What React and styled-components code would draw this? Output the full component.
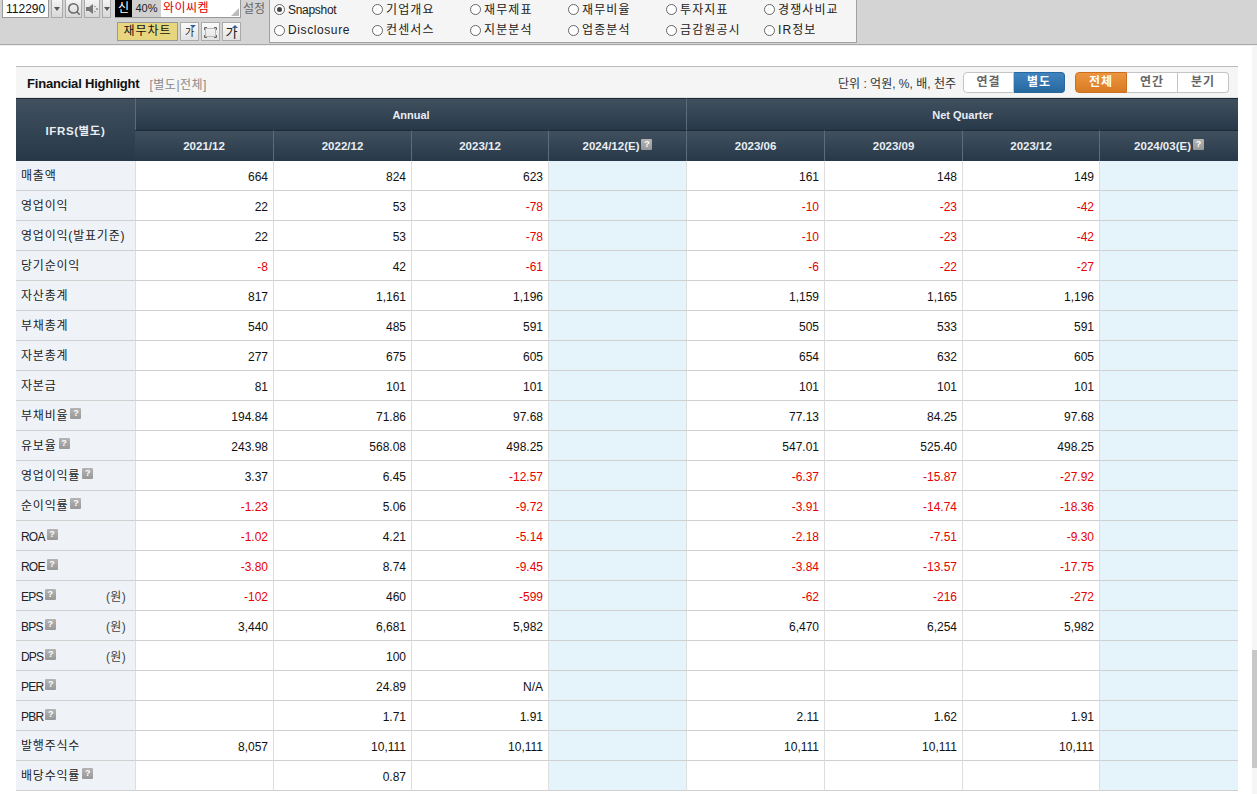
import styled, { createGlobalStyle } from "styled-components";
import { Search } from "lucide-react";

const GlobalStyle = createGlobalStyle`
  html, body {
    margin: 0;
    padding: 0;
    background: #fff;
    overflow: hidden;
  }
  body {
    font-family: "Liberation Sans", "Noto Sans CJK KR", sans-serif;
    font-size: 12px;
    color: #111;
  }
`;

const Page = styled.div`
  width: 1257px;
  height: 794px;
  position: relative;
  overflow: hidden;
`;

const Toolbar = styled.div`
  height: 45px;
  box-sizing: border-box;
  background: #d4d4d4;
  border-bottom: 1px solid #a8a8a8;
  box-shadow: 0 1px 0 #f0f0f0;
  display: flex;
  align-items: flex-start;
  padding-left: 2px;
`;

const LeftTools = styled.div`
  width: 267px;
  display: flex;
  flex-direction: column;
  gap: 4px;
`;

const ToolRow = styled.div`
  height: 18px;
  display: flex;
  align-items: stretch;
  gap: 2px;
  padding-left: ${(p) => p.$pad || 0}px;
`;

const CodeBox = styled.div`
  width: 47px;
  box-sizing: border-box;
  background: #fff;
  border: 1px solid #999;
  border-top: none;
  font-size: 12px;
  line-height: 18px;
  padding-left: 3px;
`;

const ToolBtn = styled.div`
  width: ${(p) => p.$w}px;
  box-sizing: border-box;
  background: linear-gradient(#f4f4f4, #d8d8d8);
  border: 1px solid #aaa;
  border-top: none;
  display: flex;
  align-items: center;
  justify-content: center;
  color: #666;
`;

const Caret = styled.span`
  width: 0;
  height: 0;
  border-left: 3px solid transparent;
  border-right: 3px solid transparent;
  border-top: 4px solid #555;
`;

const NameBox = styled.div`
  width: 126px;
  margin-left: 2px;
  box-sizing: border-box;
  background: #fff;
  border-right: 1px solid #999;
  border-bottom: 1px solid #999;
  display: flex;
  position: relative;
`;

const CreditTag = styled.span`
  width: 17px;
  background: #000;
  color: #fff;
  text-align: center;
  line-height: 17px;
`;

const MarginTag = styled.span`
  width: 29px;
  background: #d0d0d0;
  color: #222;
  text-align: center;
  font-size: 11px;
  line-height: 17px;
`;

const StockName = styled.span`
  color: #e00000;
  padding-left: 2px;
  line-height: 17px;
  letter-spacing: 0.5px;
`;

const Grip = styled.span`
  position: absolute;
  right: 1px;
  bottom: 1px;
  width: 0;
  height: 0;
  border-left: 8px solid transparent;
  border-bottom: 8px solid #bbb;
`;

const SetupLabel = styled.span`
  color: #666;
  line-height: 18px;
  white-space: nowrap;
`;

const ChartBtn = styled.div`
  width: 61px;
  height: 19px;
  box-sizing: border-box;
  background: #e8d67e;
  border: 1px solid #999;
  text-align: center;
  line-height: 17px;
  letter-spacing: 1px;
`;

const SmallBtn = styled.div`
  width: 19px;
  height: 19px;
  box-sizing: border-box;
  background: linear-gradient(#fafafa, #e2e2e2);
  border: 1px solid #aaa;
  position: relative;
  display: flex;
  align-items: flex-end;
  justify-content: center;
  font-size: ${(p) => p.$size || 10}px;
  line-height: 15px;
  color: #222;
`;

const FrameIcon = styled.svg`
  margin-bottom: 2px;
`;

const Arrow = styled.span`
  position: absolute;
  top: 2px;
  right: 2px;
  width: 0;
  height: 0;
  border-left: 3px solid transparent;
  border-right: 3px solid transparent;
  ${(p) => p.$up ? "border-bottom: 3px solid #3a5a9a;" : "border-top: 3px solid #3a5a9a;"}
`;

const MenuPanel = styled.div`
  width: 588px;
  height: 43px;
  box-sizing: border-box;
  background: #f5f5f5;
  border: 1px solid #a0a0a0;
  border-top: none;
  display: grid;
  grid-template-columns: repeat(6, 98px);
  grid-template-rows: 19px 22px;
  padding: 0 0 0 4px;
`;

const MenuItem = styled.div`
  display: flex;
  align-items: center;
  gap: 3px;
  color: #222;
  line-height: 16px;
  letter-spacing: ${(p) => p.$ls}px;
`;

const Radio = styled.span`
  width: 11px;
  height: 11px;
  box-sizing: border-box;
  border-radius: 50%;
  border: 1px solid #666;
  background: #fff;
  display: flex;
  align-items: center;
  justify-content: center;
  &::after {
    content: "";
    display: ${(p) => p.$on ? "block" : "none"};
    width: 5px;
    height: 5px;
    border-radius: 50%;
    background: #444;
  }
`;

const Section = styled.div`
  margin: 21px 19px 0 16px;
`;

const TitleBar = styled.div`
  height: 32px;
  box-sizing: border-box;
  background: #f5f5f5;
  border-top: 1px solid #bbb;
  border-bottom: 1px solid #e0e0e0;
  display: flex;
  align-items: center;
  padding: 0 9px 0 11px;
`;

const Title = styled.h2`
  margin: 0;
  padding-top: 2px;
  font-size: 13px;
  font-weight: 700;
  color: #111;
  letter-spacing: -0.2px;
`;

const SubTitle = styled.span`
  margin-left: 10px;
  padding-top: 2px;
  color: #888;
  letter-spacing: 0.5px;
`;

const Unit = styled.span`
  margin-left: auto;
  margin-right: 7px;
  color: #333;
`;

const Segment = styled.div`
  display: flex;
  height: 21px;
  margin-left: ${(p) => p.$ml || 0}px;
`;

const SegBtn = styled.div`
  width: ${(p) => p.$w || 51}px;
  box-sizing: border-box;
  border: 1px solid #c4c4c4;
  border-left-width: 0;
  background: #fff;
  color: #666;
  font-weight: 700;
  letter-spacing: 1px;
  text-align: center;
  line-height: 19px;
  &:first-child {
    border-left-width: 1px;
    border-radius: 4px 0 0 4px;
  }
  &:last-child {
    border-radius: 0 4px 4px 0;
  }
  ${(p) => p.$tone === "blue" && `
    background: linear-gradient(#3f83c0, #27689f);
    border-color: #27689f;
    color: #fff;
  `}
  ${(p) => p.$tone === "orange" && `
    background: linear-gradient(#ec963f, #d97a24);
    border-color: #c97020;
    color: #fff;
  `}
`;

const Table = styled.table`
  width: 1222px;
  table-layout: fixed;
  border-collapse: separate;
  border-spacing: 0;
`;

const HeadCell = styled.th`
  height: ${(p) => p.$h}px;
  padding: 0;
  box-sizing: border-box;
  background: linear-gradient(#40505f, #273848);
  border-top: 1px solid #1d2a36;
  border-left: 1px solid #5d6c79;
  color: #e8eef3;
  font-size: ${(p) => p.$size || 11.5}px;
  font-weight: 700;
  letter-spacing: ${(p) => p.$ls || 0}px;
  text-align: center;
  &:first-child {
    border-left: none;
  }
`;

const Row = styled.tr`
  height: 30px;
`;

const LabelCell = styled.td`
  padding: ${(p) => p.$latin ? "2px" : "0"} 9px 0 5px;
  box-sizing: border-box;
  background: #eff3f8;
  border-bottom: 1px solid #d0d0d0;
  color: #222;
  line-height: 16px;
`;

const LabelInner = styled.div`
  display: flex;
  align-items: center;
  letter-spacing: ${(p) => p.$latin ? -0.8 : 0.8}px;
`;

const Won = styled.span`
  margin-left: auto;
  color: #444;
  letter-spacing: 0.3px;
`;

const Cell = styled.td`
  padding: 2px 5px 0 0;
  box-sizing: border-box;
  text-align: right;
  background: ${(p) => p.$est ? "#e4f4fa" : "#fff"};
  border-bottom: 1px solid #d0d0d0;
  border-left: 1px solid #dedede;
  color: ${(p) => p.$neg ? "#e60000" : "#111"};
`;

const Help = styled.span`
  display: inline-block;
  position: relative;
  top: -2px;
  width: 11px;
  height: 11px;
  margin-left: 2px;
  border-radius: 1px;
  background: linear-gradient(#b4b4b4, #989898);
  color: #fff;
  font-size: 9px;
  font-weight: 700;
  letter-spacing: 0;
  line-height: 11px;
  text-align: center;
  vertical-align: middle;
`;

const ScrollTrack = styled.div`
  position: absolute;
  top: 46px;
  right: 0;
  bottom: 0;
  width: 5px;
  background: #f6f6f6;
`;

const ScrollThumb = styled.div`
  position: absolute;
  top: 604px;
  left: 0;
  width: 5px;
  height: 118px;
  background: #c8c8c8;
`;

const menus = [
  ["Snapshot", -0.3], ["기업개요", 1.1], ["재무제표", 1.1], ["재무비율", 1.1], ["투자지표", 1.1], ["경쟁사비교", 1.1],
  ["Disclosure", 0.6], ["컨센서스", 1.1], ["지분분석", 1.1], ["업종분석", 1.1], ["금감원공시", 1.1], ["IR정보", 1.1],
];

const colWidths = [119, 138, 138, 137, 138, 138, 138, 137, 139];
const annual = ["2021/12", "2022/12", "2023/12", "2024/12(E)"];
const quarter = ["2023/06", "2023/09", "2023/12", "2024/03(E)"];

// [label, help icon, unit, values: 3 annual then 3 quarter]
const rows = [
  ["매출액", false, false, ["664", "824", "623", "161", "148", "149"]],
  ["영업이익", false, false, ["22", "53", "-78", "-10", "-23", "-42"]],
  ["영업이익(발표기준)", false, false, ["22", "53", "-78", "-10", "-23", "-42"]],
  ["당기순이익", false, false, ["-8", "42", "-61", "-6", "-22", "-27"]],
  ["자산총계", false, false, ["817", "1,161", "1,196", "1,159", "1,165", "1,196"]],
  ["부채총계", false, false, ["540", "485", "591", "505", "533", "591"]],
  ["자본총계", false, false, ["277", "675", "605", "654", "632", "605"]],
  ["자본금", false, false, ["81", "101", "101", "101", "101", "101"]],
  ["부채비율", true, false, ["194.84", "71.86", "97.68", "77.13", "84.25", "97.68"]],
  ["유보율", true, false, ["243.98", "568.08", "498.25", "547.01", "525.40", "498.25"]],
  ["영업이익률", true, false, ["3.37", "6.45", "-12.57", "-6.37", "-15.87", "-27.92"]],
  ["순이익률", true, false, ["-1.23", "5.06", "-9.72", "-3.91", "-14.74", "-18.36"]],
  ["ROA", true, false, ["-1.02", "4.21", "-5.14", "-2.18", "-7.51", "-9.30"]],
  ["ROE", true, false, ["-3.80", "8.74", "-9.45", "-3.84", "-13.57", "-17.75"]],
  ["EPS", true, true, ["-102", "460", "-599", "-62", "-216", "-272"]],
  ["BPS", true, true, ["3,440", "6,681", "5,982", "6,470", "6,254", "5,982"]],
  ["DPS", true, true, ["", "100", "", "", "", ""]],
  ["PER", true, false, ["", "24.89", "N/A", "", "", ""]],
  ["PBR", true, false, ["", "1.71", "1.91", "2.11", "1.62", "1.91"]],
  ["발행주식수", false, false, ["8,057", "10,111", "10,111", "10,111", "10,111", "10,111"]],
  ["배당수익률", true, false, ["", "0.87", "", "", "", ""]],
];

const HeadLabel = ({ text }) => {
  const est = text.endsWith("(E)");
  return (
    <>
      {text}
      {est && <Help>?</Help>}
    </>
  );
};

const ValueCell = ({ value }) => (
  <Cell $neg={value.startsWith("-")}>{value}</Cell>
);

const App = () => {
  return (
    <Page>
      <GlobalStyle />
      <Toolbar>
        <LeftTools>
          <ToolRow>
            <CodeBox>112290</CodeBox>
            <ToolBtn $w={12}><Caret /></ToolBtn>
            <ToolBtn $w={17}><Search size={14} strokeWidth={2.5} /></ToolBtn>
            <ToolBtn $w={16}>
              <svg width="13" height="12" viewBox="0 0 13 12">
                <path d="M0 4h3l4-3v10L3 8H0z" fill="#777" />
                <path d="M9 3v1M9 8v1M11 5v2" stroke="#777" strokeWidth="1.2" />
              </svg>
            </ToolBtn>
            <ToolBtn $w={9}><Caret /></ToolBtn>
            <NameBox>
              <CreditTag>신</CreditTag>
              <MarginTag>40%</MarginTag>
              <StockName>와이씨켐</StockName>
              <Grip />
            </NameBox>
            <SetupLabel>설정</SetupLabel>
          </ToolRow>
          <ToolRow $pad={115}>
            <ChartBtn>재무차트</ChartBtn>
            <SmallBtn>가<Arrow /></SmallBtn>
            <SmallBtn>
              <FrameIcon width="13" height="11" viewBox="0 0 13 11">
                <rect x="1.5" y="1.5" width="10" height="8" fill="none" stroke="#b8b8b8" />
                <path d="M0.5 3V0.5H3M10 0.5h2.5V3M0.5 8v2.5H3M10 10.5h2.5V8" fill="none" stroke="#666" />
              </FrameIcon>
            </SmallBtn>
            <SmallBtn $size={13}>가<Arrow $up /></SmallBtn>
          </ToolRow>
        </LeftTools>
        <MenuPanel>
          {menus.map(([name, ls]) => (
            <MenuItem key={name} $ls={ls}>
              <Radio $on={name === "Snapshot"} />
              {name}
            </MenuItem>
          ))}
        </MenuPanel>
      </Toolbar>

      <Section>
        <TitleBar>
          <Title>Financial Highlight</Title>
          <SubTitle>[별도|전체]</SubTitle>
          <Unit>단위 : 억원, %, 배, 천주</Unit>
          <Segment>
            <SegBtn>연결</SegBtn>
            <SegBtn $tone="blue">별도</SegBtn>
          </Segment>
          <Segment $ml={10}>
            <SegBtn $tone="orange" $w={52}>전체</SegBtn>
            <SegBtn>연간</SegBtn>
            <SegBtn>분기</SegBtn>
          </Segment>
        </TitleBar>
        <Table>
          <colgroup>
            {colWidths.map((w, i) => <col key={i} width={w} />)}
          </colgroup>
          <thead>
            <tr>
              <HeadCell $h={63} $ls={0.6} rowSpan={2}>IFRS(별도)</HeadCell>
              <HeadCell $h={32} $size={11} colSpan={4}>Annual</HeadCell>
              <HeadCell $h={32} $size={11} colSpan={4}>Net Quarter</HeadCell>
            </tr>
            <tr>
              {[...annual, ...quarter].map((d, i) => (
                <HeadCell $h={31} key={i}><HeadLabel text={d} /></HeadCell>
              ))}
            </tr>
          </thead>
          <tbody>
            {rows.map(([label, help, won, v]) => {
              const latin = /^[A-Z]/.test(label);
              return (
                <Row key={label}>
                  <LabelCell $latin={latin}>
                    <LabelInner $latin={latin}>
                      {label}
                      {help && <Help>?</Help>}
                      {won && <Won>(원)</Won>}
                    </LabelInner>
                  </LabelCell>
                  <ValueCell value={v[0]} />
                  <ValueCell value={v[1]} />
                  <ValueCell value={v[2]} />
                  <Cell $est />
                  <ValueCell value={v[3]} />
                  <ValueCell value={v[4]} />
                  <ValueCell value={v[5]} />
                  <Cell $est />
                </Row>
              );
            })}
          </tbody>
        </Table>
      </Section>

      <ScrollTrack>
        <ScrollThumb />
      </ScrollTrack>
    </Page>
  );
};

export default App;
